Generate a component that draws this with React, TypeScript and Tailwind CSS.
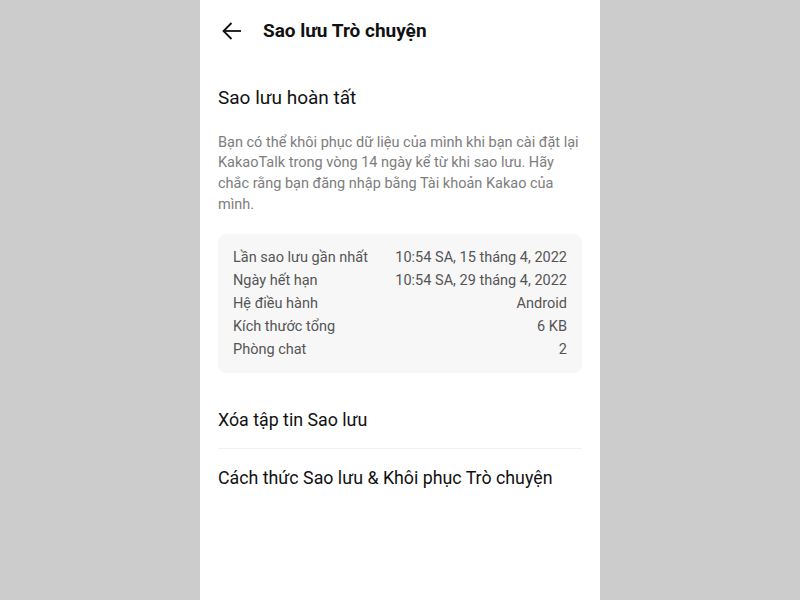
import React from "react"

const info = [
  ["Lần sao lưu gần nhất", "10:54 SA, 15 tháng 4, 2022"],
  ["Ngày hết hạn", "10:54 SA, 29 tháng 4, 2022"],
  ["Hệ điều hành", "Android"],
  ["Kích thước tổng", "6 KB"],
  ["Phòng chat", "2"],
]

function BackArrow() {
  return (
    <svg width="22" height="22" viewBox="0 0 22 22" fill="none" stroke="#111" strokeWidth="1.8">
      <path d="M20 11H2.5" />
      <path d="M10.5 3L2.5 11l8 8" />
    </svg>
  )
}

export default function App() {
  return (
    <div className="flex h-[600px] w-[800px] justify-center bg-[#cccccc] font-['Roboto',sans-serif]">
      <div className="w-[400px] bg-white px-[18px]">
        <header className="flex h-[62px] items-center">
          <span className="ml-[3px]">
            <BackArrow />
          </span>
          <h1 className="ml-[20px] text-[19px] font-bold text-[#111]">Sao lưu Trò chuyện</h1>
        </header>

        <h2 className="mt-[22px] text-[19px] text-[#111]">Sao lưu hoàn tất</h2>

        <p className="mt-[20px] text-[14.5px] leading-[20.7px] text-[#7d7d7d]">
          Bạn có thể khôi phục dữ liệu của mình khi bạn cài đặt lại KakaoTalk trong vòng 14 ngày kể từ khi sao
          lưu. Hãy chắc rằng bạn đăng nhập bằng Tài khoản Kakao của mình.
        </p>

        <div className="mt-[19px] rounded-lg bg-[#f7f7f7] px-[15px] py-[12px]">
          {info.map(([label, value]) => (
            <div key={label} className="flex justify-between text-[14.5px] leading-[23px] text-[#555]">
              <span>{label}</span>
              <span>{value}</span>
            </div>
          ))}
        </div>

        <div className="mt-[34px] border-b border-[#f0f0f0] pb-[14px] text-[17.8px] text-[#111]">
          Xóa tập tin Sao lưu
        </div>
        <div className="pt-[16px] text-[17.8px] text-[#111]">Cách thức Sao lưu &amp; Khôi phục Trò chuyện</div>
      </div>
    </div>
  )
}
